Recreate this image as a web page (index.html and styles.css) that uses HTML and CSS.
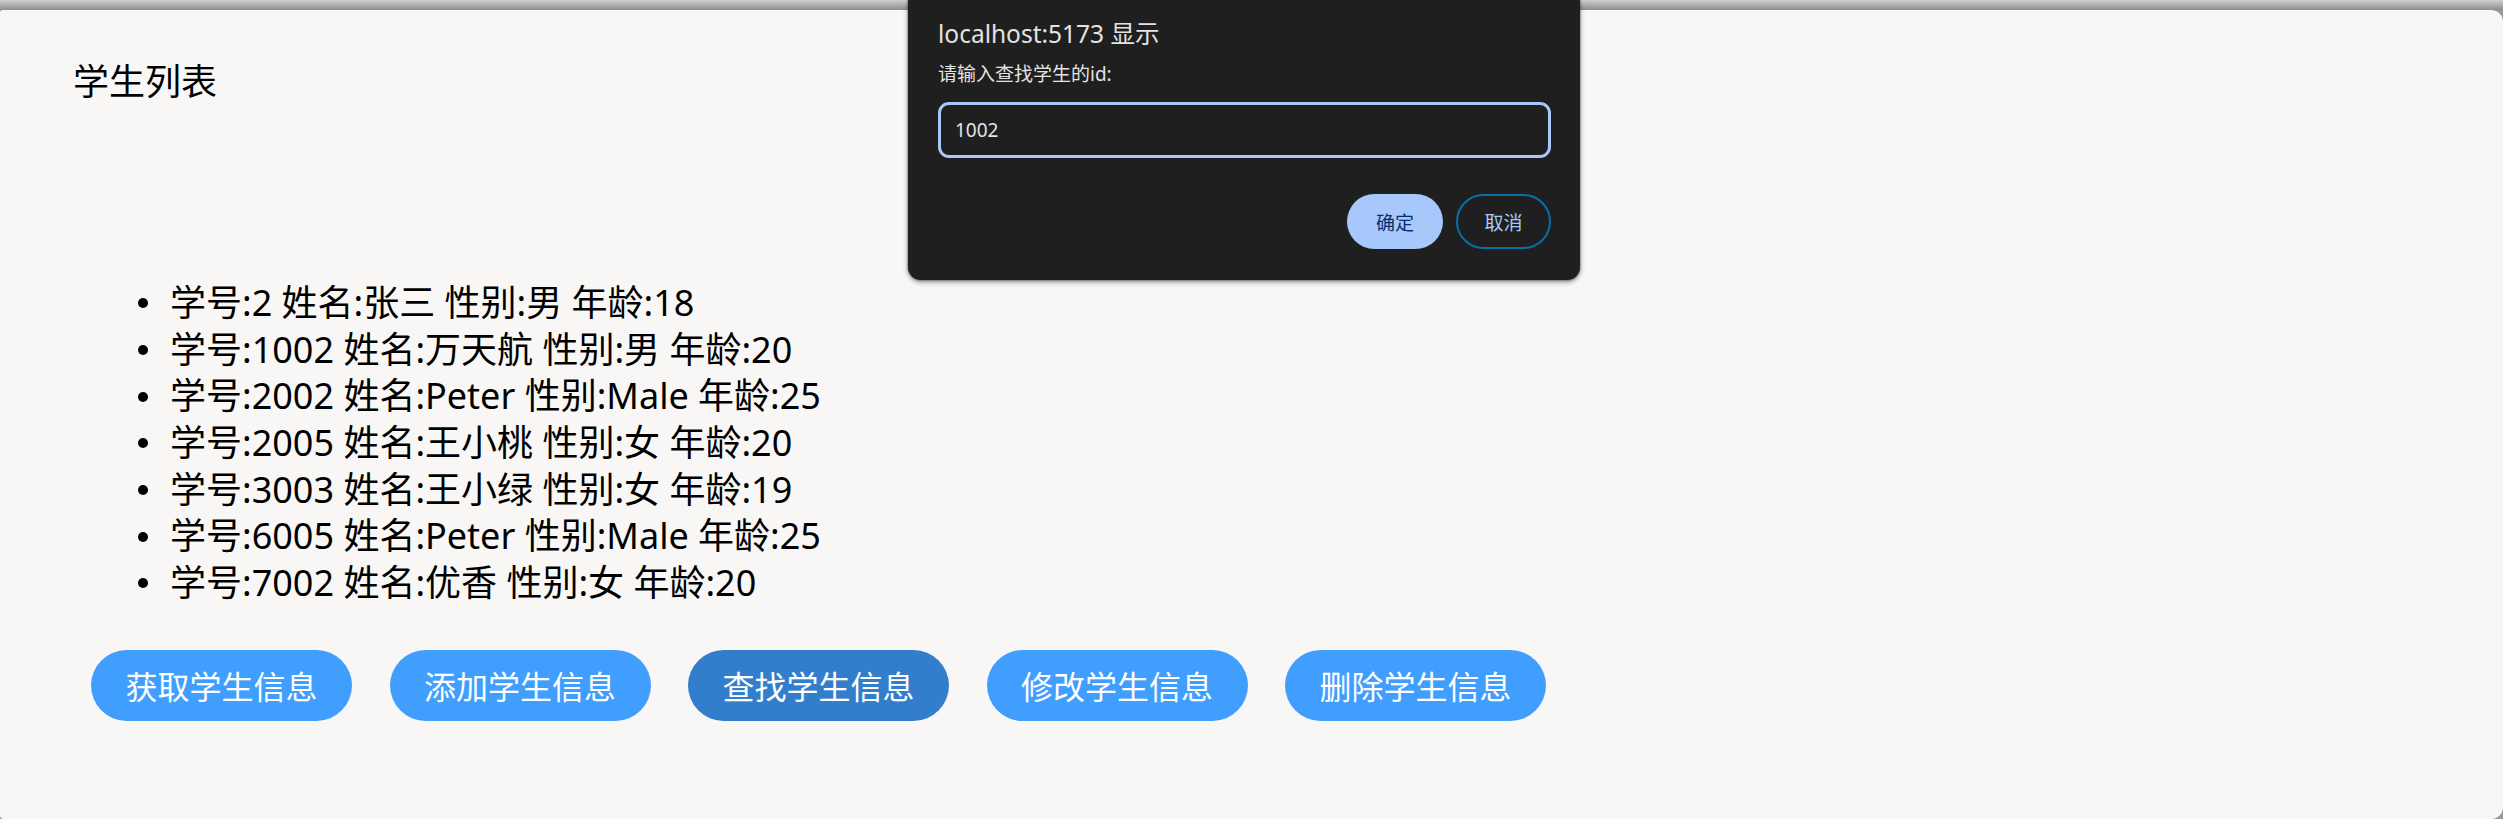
FILE: index.html
```html
<!DOCTYPE html>
<html lang="zh-CN">
<head>
<meta charset="utf-8">
<title>学生列表</title>
<link rel="stylesheet" href="styles.css">
</head>
<body>
<div class="topband"></div>
<main class="page">
  <h3 class="title">学生列表</h3>
  <ul class="list">
    <li>学号:2 姓名:张三 性别:男 年龄:18</li>
    <li>学号:1002 姓名:万天航 性别:男 年龄:20</li>
    <li>学号:2002 姓名:Peter 性别:Male 年龄:25</li>
    <li>学号:2005 姓名:王小桃 性别:女 年龄:20</li>
    <li>学号:3003 姓名:王小绿 性别:女 年龄:19</li>
    <li>学号:6005 姓名:Peter 性别:Male 年龄:25</li>
    <li>学号:7002 姓名:优香 性别:女 年龄:20</li>
  </ul>
  <div class="actions">
    <button class="btn">获取学生信息</button>
    <button class="btn">添加学生信息</button>
    <button class="btn btn-active">查找学生信息</button>
    <button class="btn">修改学生信息</button>
    <button class="btn">删除学生信息</button>
  </div>
</main>
<div class="dialog">
  <div class="dialog-title">localhost:5173 显示</div>
  <div class="dialog-msg">请输入查找学生的id:</div>
  <input class="dialog-input" type="text" value="1002">
  <div class="dialog-actions">
    <button class="dbtn dbtn-ok">确定</button>
    <button class="dbtn dbtn-cancel">取消</button>
  </div>
</div>
</body>
</html>
```
FILE: styles.css
```css
html, body {
  margin: 0;
  padding: 0;
}
body {
  width: 2503px;
  height: 819px;
  overflow: hidden;
  background: #9a9a9a;
  font-family: "Noto Sans", "Noto Sans CJK SC", sans-serif;
  color: #000;
}
.topband {
  height: 10px;
  background: linear-gradient(#cfcfcf, #8c8c8c);
}
.page {
  height: 809px;
  box-sizing: border-box;
  background: #f8f7f5;
  border-radius: 3px 12px 12px 4px;
  padding: 48px 0 0 73px;
}
.title {
  margin: 0;
  font-size: 36px;
  font-weight: normal;
  line-height: 47px;
}
.list {
  list-style: none;
  margin: 175px 0 0 0;
  padding: 0 0 0 65px;
}
.list li {
  display: flex;
  align-items: center;
  font-size: 36px;
  line-height: 46.7px;
  height: 46.7px;
  white-space: nowrap;
}
.list li::before {
  content: "";
  width: 10px;
  height: 10px;
  border-radius: 50%;
  background: #000;
  margin-right: 22px;
  flex: none;
}
.actions {
  display: flex;
  gap: 37.5px;
  margin: 43px 0 0 18px;
}
.btn {
  height: 71px;
  padding: 0 34.5px;
  border: none;
  border-radius: 36px;
  background: #409eff;
  color: #fff;
  font-family: "Noto Sans CJK SC", sans-serif;
  font-size: 32px;
  line-height: 71px;
}
.btn-active {
  background: #337ecc;
}
.dialog {
  position: absolute;
  left: 908px;
  top: 0;
  width: 672px;
  height: 280px;
  box-sizing: border-box;
  background: #1f1f1f;
  border-radius: 0 0 13px 13px;
  box-shadow: 0 2px 5px rgba(0, 0, 0, 0.45), 0 0 2px rgba(0, 0, 0, 0.6);
  padding: 20px 29px 0 30px;
  display: flex;
  flex-direction: column;
  color: #e3e3e3;
}
.dialog-title {
  font-size: 24.5px;
  line-height: 28px;
}
.dialog-msg {
  margin-top: 13px;
  font-size: 19px;
  line-height: 26px;
}
.dialog-input {
  margin-top: 15px;
  height: 56px;
  box-sizing: border-box;
  border: 3px solid #a8c7fa;
  border-radius: 11px;
  background: #1f1f1f;
  color: #e3e3e3;
  font-family: "Noto Sans", sans-serif;
  font-size: 19px;
  padding: 0 14px;
  outline: none;
}
.dialog-actions {
  display: flex;
  justify-content: flex-end;
  gap: 13px;
  margin-top: 36px;
}
.dbtn {
  height: 55px;
  width: 96px;
  border-radius: 28px;
  font-family: "Noto Sans CJK SC", sans-serif;
  font-size: 19px;
  padding: 0;
}
.dbtn-ok {
  background: #a8c7fa;
  color: #062e6f;
  border: none;
}
.dbtn-cancel {
  width: 95px;
  background: transparent;
  color: #a8c7fa;
  border: 2px solid #0b6fa5;
}
```
